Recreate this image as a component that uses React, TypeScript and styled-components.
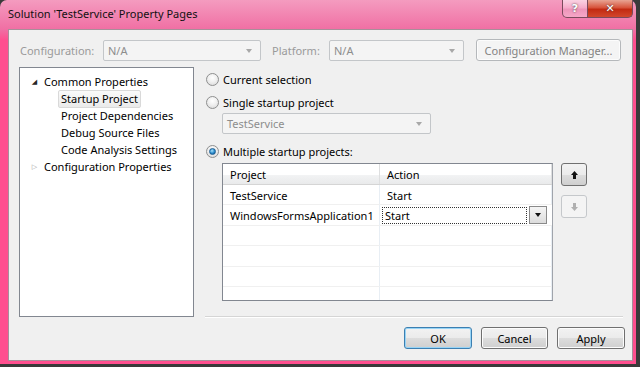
import React from 'react';
import styled, { createGlobalStyle } from 'styled-components';

const GlobalStyle = createGlobalStyle`
    html, body {
        margin: 0;
        padding: 0;
        background: #3a3a3a;
        width: 640px;
        height: 367px;
        overflow: hidden;
    }
    body {
        font-family: 'Noto Sans', 'Open Sans', sans-serif;
        font-size: 11px;
        color: #000;
    }
`;

const Window = styled.div`
    width: 636px;
    height: 364px;
    box-sizing: border-box;
    padding: 0 3px 3px 8px;
    border-radius: 7px 7px 0 0;
    background: linear-gradient(
        to bottom,
        #f49bbf 0px,
        #f06ea3 30px,
        #ff4f8f 40px,
        #ff4f8f 100%
    );
    display: flex;
    flex-direction: column;
    position: relative;
`;

const TitleBar = styled.div`
    height: 29px;
    display: flex;
    align-items: flex-start;
`;

const Title = styled.div`
    padding-top: 6px;
    font-size: 11px;
    color: #111;
`;

const CaptionButtons = styled.div`
    position: absolute;
    top: 0;
    right: 3px;
    display: flex;
`;

const CaptionButton = styled.div<{ $close?: boolean }>`
    height: 18px;
    width: ${(p) => (p.$close ? '45px' : '26px')};
    box-sizing: border-box;
    border: 1px solid #7a4a5c;
    border-top: none;
    border-left: ${(p) => (p.$close ? 'none' : '1px solid #7a4a5c')};
    border-radius: ${(p) => (p.$close ? '0 0 5px 0' : '0 0 0 5px')};
    background: ${(p) =>
        p.$close
            ? 'linear-gradient(to bottom, #e8a493 0%, #d7533b 45%, #c22a12 55%, #d2472c 100%)'
            : 'linear-gradient(to bottom, rgba(255,255,255,0.55) 0%, rgba(255,255,255,0.25) 45%, rgba(230,160,190,0.4) 55%, rgba(255,255,255,0.3) 100%)'};
    display: flex;
    align-items: center;
    justify-content: center;
    color: #fff;
    font-family: 'DejaVu Sans', sans-serif;
    font-weight: bold;
    font-size: 11px;
    text-shadow: 0 0 2px #333;
`;

const Client = styled.div`
    flex: 1;
    background: #f0f0f0;
    border: 1px solid #a88f9a;
    display: flex;
    flex-direction: column;
    padding: 9px 7px 10px 10px;
`;

const ConfigRow = styled.div`
    display: flex;
    align-items: center;
    height: 22px;
    padding-left: 1px;
`;

const DimLabel = styled.span<{ $w: number }>`
    color: #9a9a9a;
    width: ${(p) => p.$w}px;
`;

const Combo = styled.div<{ $w: number }>`
    width: ${(p) => p.$w}px;
    height: 21px;
    box-sizing: border-box;
    border: 1px solid #c3c6c9;
    border-radius: 2px;
    background: #f4f4f4;
    color: #8d8d8d;
    display: flex;
    align-items: center;
    padding-left: 4px;
    position: relative;
    &::after {
        content: '';
        position: absolute;
        right: 8px;
        top: 8px;
        border-left: 3px solid transparent;
        border-right: 3px solid transparent;
        border-top: 4px solid #a8a8a8;
    }
`;

const Gap = styled.div<{ $w: number }>`
    width: ${(p) => p.$w}px;
    flex-shrink: 0;
`;

const Button = styled.div<{ $w: number; $default?: boolean; $disabled?: boolean }>`
    width: ${(p) => p.$w}px;
    height: 22px;
    box-sizing: border-box;
    border: 1px solid
        ${(p) => (p.$default ? '#3c7fb1' : p.$disabled ? '#b5b8bb' : '#707070')};
    border-radius: 3px;
    background: ${(p) =>
        p.$disabled
            ? '#f4f4f4'
            : 'linear-gradient(to bottom, #f2f2f2 0%, #ebebeb 50%, #dddddd 51%, #cfcfcf 100%)'};
    box-shadow: ${(p) => (p.$default ? 'inset 0 0 0 1px #97d4f6' : 'inset 0 0 0 1px #fcfcfc')};
    color: ${(p) => (p.$disabled ? '#838383' : '#000')};
    display: flex;
    align-items: center;
    justify-content: center;
`;

const Main = styled.div`
    display: flex;
    margin-top: 6px;
    height: 251px;
`;

const Tree = styled.div`
    width: 175px;
    height: 250px;
    box-sizing: border-box;
    border: 1px solid #828790;
    background: #fff;
    padding-top: 5px;
`;

const TreeItem = styled.div<{ $level: number }>`
    height: 17px;
    display: flex;
    align-items: center;
    padding-left: ${(p) => (p.$level === 0 ? 8 : 38)}px;
`;

const Expander = styled.span<{ $open?: boolean }>`
    width: 13px;
    display: inline-flex;
    justify-content: center;
    font-size: 7px;
    color: ${(p) => (p.$open ? '#262626' : '#a0a0a0')};
    font-family: 'DejaVu Sans', sans-serif;
`;

const ItemLabel = styled.span<{ $selected?: boolean }>`
    padding: 0 2px;
    height: 18px;
    box-sizing: border-box;
    border: 1px solid ${(p) => (p.$selected ? '#d9d9d9' : 'transparent')};
    border-radius: 2px;
    background: ${(p) => (p.$selected ? 'linear-gradient(#fafafa, #eaeaea)' : 'transparent')};
    line-height: 16px;
`;

const RightPanel = styled.div`
    flex: 1;
    margin-left: 12px;
    display: flex;
    flex-direction: column;
    padding-top: 3px;
`;

const RadioRow = styled.div<{ $mt: number }>`
    height: 18px;
    margin-top: ${(p) => p.$mt}px;
    display: flex;
    align-items: center;
`;

const Radio = styled.span<{ $checked?: boolean }>`
    width: 13px;
    height: 13px;
    box-sizing: border-box;
    border-radius: 50%;
    border: 1px solid #8e8f8f;
    background: radial-gradient(circle at 50% 35%, #ffffff 0%, #f0f0f0 45%, #d5d5d5 100%);
    margin-right: 4px;
    display: inline-flex;
    align-items: center;
    justify-content: center;
    &::after {
        content: '';
        display: ${(p) => (p.$checked ? 'block' : 'none')};
        width: 5px;
        height: 5px;
        border-radius: 50%;
        background: radial-gradient(circle at 40% 35%, #a9e2fb 0%, #2b8ccd 55%, #0d4a80 100%);
        border: 1px solid #1d5f94;
    }
`;

const Indented = styled.div<{ $mt: number }>`
    margin-left: 16px;
    margin-top: ${(p) => p.$mt}px;
    display: flex;
`;

const Grid = styled.div`
    width: 331px;
    height: 138px;
    box-sizing: border-box;
    border: 1px solid #828790;
    border-right-color: #a0a4ab;
    background: #fff;
    overflow: hidden;
`;

const GridRow = styled.div<{ $header?: boolean }>`
    display: grid;
    grid-template-columns: 157px 1fr;
    height: 20.5px;
    box-sizing: border-box;
    border-bottom: 1px solid ${(p) => (p.$header ? '#d5d5d5' : '#f0f0f0')};
    background: ${(p) =>
        p.$header ? 'linear-gradient(to bottom, #ffffff 0%, #ffffff 55%, #f2f3f4 56%, #e9eaeb 100%)' : '#fff'};
`;

const Cell = styled.div<{ $header?: boolean }>`
    display: flex;
    align-items: center;
    padding: ${(p) => (p.$header ? '1px 0 0 7px' : '2px 0 0 7px')};
    border-right: 1px solid ${(p) => (p.$header ? '#dedfe0' : '#e8eef4')};
`;

const EditCell = styled.div`
    display: flex;
    align-items: center;
    padding: 1px 2px 0;
`;

const FocusBox = styled.div`
    width: 145px;
    height: 17px;
    box-sizing: border-box;
    border: 1px dotted #333;
    display: flex;
    align-items: center;
    padding: 1px 0 0 2px;
`;

const DropButton = styled.div`
    width: 18px;
    height: 18px;
    margin-left: 2px;
    box-sizing: border-box;
    border: 1px solid #8a8a8a;
    background: linear-gradient(#f5f5f5, #dcdcdc);
    display: flex;
    align-items: center;
    justify-content: center;
    &::after {
        content: '';
        border-left: 3px solid transparent;
        border-right: 3px solid transparent;
        border-top: 4px solid #111;
    }
`;

const GridArea = styled.div`
    display: flex;
    margin-top: 3px;
    margin-left: 16px;
`;

const MoveButtons = styled.div`
    display: flex;
    flex-direction: column;
    gap: 9px;
    margin-left: 8px;
`;

const MoveButton = styled.div<{ $disabled?: boolean }>`
    width: 26px;
    height: 23px;
    box-sizing: border-box;
    border: 1px solid ${(p) => (p.$disabled ? '#c5c8cb' : '#707070')};
    border-radius: 3px;
    background: ${(p) =>
        p.$disabled
            ? '#f4f4f4'
            : 'linear-gradient(to bottom, #f2f2f2 0%, #ebebeb 50%, #dddddd 51%, #cfcfcf 100%)'};
    display: flex;
    align-items: center;
    justify-content: center;
`;

const Separator = styled.div`
    margin-top: auto;
    margin-left: -1px;
    height: 1px;
    width: 418px;
    background: #d5d5d5;
    border-bottom: 1px solid #fff;
`;

const Footer = styled.div`
    display: flex;
    justify-content: flex-end;
    gap: 9px;
    margin-top: 9px;
`;

const Arrow = ({ down, color }: { down?: boolean; color: string }) => (
    <svg width="9" height="10" viewBox="0 0 9 10" style={{ transform: down ? 'rotate(180deg)' : undefined }}>
        <path d="M4.5 1 L8 5 L6 5 L6 9 L3 9 L3 5 L1 5 Z" fill={color} />
    </svg>
);

const emptyRows = [0, 1, 2, 3, 4];

const App = () => {
    return (
        <>
            <GlobalStyle />
            <Window>
                <TitleBar>
                    <Title>Solution 'TestService' Property Pages</Title>
                </TitleBar>
                <CaptionButtons>
                    <CaptionButton>?</CaptionButton>
                    <CaptionButton $close>✕</CaptionButton>
                </CaptionButtons>
                <Client>
                    <ConfigRow>
                        <DimLabel $w={83}>Configuration:</DimLabel>
                        <Combo $w={158}>N/A</Combo>
                        <Gap $w={11} />
                        <DimLabel $w={57}>Platform:</DimLabel>
                        <Combo $w={135}>N/A</Combo>
                        <Gap $w={12} />
                        <Button $w={145} $disabled>
                            Configuration Manager...
                        </Button>
                    </ConfigRow>
                    <Main>
                        <Tree>
                            <TreeItem $level={0}>
                                <Expander $open>◢</Expander>
                                <ItemLabel>Common Properties</ItemLabel>
                            </TreeItem>
                            <TreeItem $level={1}>
                                <ItemLabel $selected>Startup Project</ItemLabel>
                            </TreeItem>
                            <TreeItem $level={1}>
                                <ItemLabel>Project Dependencies</ItemLabel>
                            </TreeItem>
                            <TreeItem $level={1}>
                                <ItemLabel>Debug Source Files</ItemLabel>
                            </TreeItem>
                            <TreeItem $level={1}>
                                <ItemLabel>Code Analysis Settings</ItemLabel>
                            </TreeItem>
                            <TreeItem $level={0}>
                                <Expander>▷</Expander>
                                <ItemLabel>Configuration Properties</ItemLabel>
                            </TreeItem>
                        </Tree>
                        <RightPanel>
                            <RadioRow $mt={0}>
                                <Radio />
                                Current selection
                            </RadioRow>
                            <RadioRow $mt={5}>
                                <Radio />
                                Single startup project
                            </RadioRow>
                            <Indented $mt={2}>
                                <Combo $w={209}>TestService</Combo>
                            </Indented>
                            <RadioRow $mt={8}>
                                <Radio $checked />
                                Multiple startup projects:
                            </RadioRow>
                            <GridArea>
                                <Grid>
                                    <GridRow $header>
                                        <Cell $header>Project</Cell>
                                        <Cell $header>Action</Cell>
                                    </GridRow>
                                    <GridRow>
                                        <Cell>TestService</Cell>
                                        <Cell>Start</Cell>
                                    </GridRow>
                                    <GridRow>
                                        <Cell>WindowsFormsApplication1</Cell>
                                        <EditCell>
                                            <FocusBox>Start</FocusBox>
                                            <DropButton />
                                        </EditCell>
                                    </GridRow>
                                    {emptyRows.map((i) => (
                                        <GridRow key={i}>
                                            <Cell />
                                            <Cell />
                                        </GridRow>
                                    ))}
                                </Grid>
                                <MoveButtons>
                                    <MoveButton>
                                        <Arrow color="#111" />
                                    </MoveButton>
                                    <MoveButton $disabled>
                                        <Arrow down color="#b0b0b0" />
                                    </MoveButton>
                                </MoveButtons>
                            </GridArea>
                            <Separator />
                        </RightPanel>
                    </Main>
                    <Footer>
                        <Button $w={68} $default>
                            OK
                        </Button>
                        <Button $w={67}>Cancel</Button>
                        <Button $w={68}>Apply</Button>
                    </Footer>
                </Client>
            </Window>
        </>
    );
};

export default App;
